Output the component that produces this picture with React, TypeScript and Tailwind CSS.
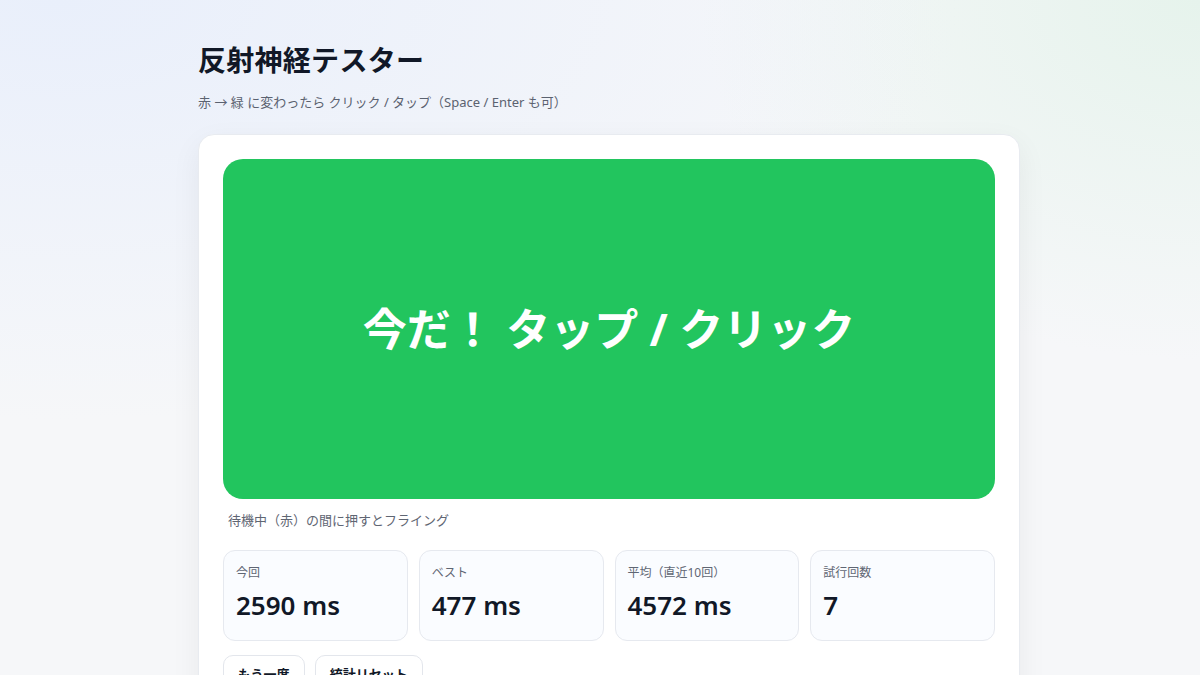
import { useState } from "react";

interface Stat {
  label: string;
  value: string;
}

const stats: Stat[] = [
  { label: "今回", value: "2590 ms" },
  { label: "ベスト", value: "477 ms" },
  { label: "平均（直近10回）", value: "4572 ms" },
  { label: "試行回数", value: "7" },
];

export default function App() {
  const [tries, setTries] = useState(7);

  return (
    <div
      className="min-h-[675px] bg-[#f6f7f9] bg-[image:radial-gradient(900px_420px_at_5%_0%,#e9effb,transparent),radial-gradient(500px_360px_at_100%_0%,#e6f3ec,transparent)] text-[#111827]"
      style={{ fontFamily: '"Noto Sans", "Noto Sans CJK JP", sans-serif' }}
    >
      <div className="mx-auto w-[840px] pl-[18px] pt-[38px]">
        <h1 className="text-[28px] font-bold leading-[44px] tracking-[0.01em]">
          反射神経テスター
        </h1>
        <p className="mt-[10px] text-[13px] leading-[20px] text-[#5b6270]">
          赤 → 緑 に変わったら クリック / タップ（Space / Enter も可）
        </p>

        <div className="mt-[22px] rounded-[16px] border border-[#e8ebf0] bg-white px-[24px] pt-[24px] pb-[20px] shadow-[0_10px_30px_rgba(15,23,42,0.06)]">
          <button
            type="button"
            onClick={() => setTries(tries + 1)}
            className="flex h-[340px] w-full items-center justify-center rounded-[20px] bg-[#22c55e] text-[44px] font-bold text-white"
          >
            今だ！ タップ / クリック
          </button>

          <p className="mt-[11px] pl-[5px] text-[13px] leading-[20px] text-[#5f6673]">
            待機中（赤）の間に押すとフライング
          </p>

          <div className="mt-[20px] grid grid-cols-4 gap-[11px]">
            {stats.map((s) => (
              <div
                key={s.label}
                className="h-[91px] rounded-[12px] border border-[#e6e9ef] bg-[#fafcff] px-[12px] pt-[13px]"
              >
                <div className="text-[12px] leading-[18px] text-[#5f6673]">{s.label}</div>
                <div className="mt-[5px] text-[26px] font-semibold leading-[36px]">
                  {s.label === "試行回数" ? tries : s.value}
                </div>
              </div>
            ))}
          </div>

          <div className="mt-[14px] flex gap-[10px]">
            <button
              type="button"
              className="h-[40px] rounded-[10px] border border-[#e3e6ec] bg-white px-[14px] text-[13px] font-bold"
            >
              もう一度
            </button>
            <button
              type="button"
              onClick={() => setTries(0)}
              className="h-[40px] rounded-[10px] border border-[#e3e6ec] bg-white px-[14px] text-[13px] font-bold"
            >
              統計リセット
            </button>
          </div>
        </div>
      </div>
    </div>
  );
}
